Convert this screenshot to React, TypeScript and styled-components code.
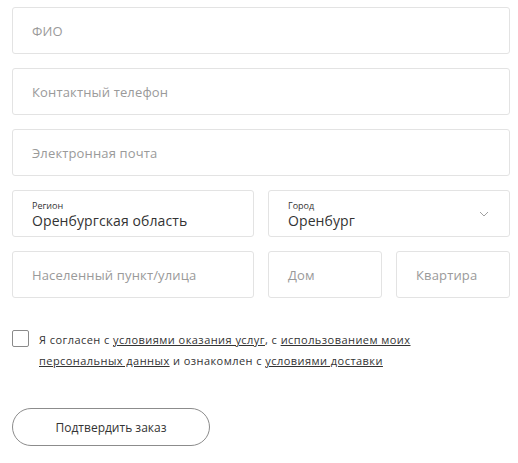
import styled, { createGlobalStyle } from 'styled-components';

const GlobalStyle = createGlobalStyle`
  body {
    margin: 0;
    background: #ffffff;
    font-family: 'Open Sans', 'Liberation Sans', sans-serif;
  }
`;

const Form = styled.form`
  width: 498px;
  padding: 7px 12px 0;
`;

const Fields = styled.div`
  display: grid;
  grid-template-columns: 242px 114px 114px;
  gap: 14px;
`;

const Field = styled.div<{ $span?: number }>`
  grid-column: span ${({ $span }) => $span ?? 3};
  position: relative;
  height: 47px;
  box-sizing: border-box;
  border: 1px solid #e3e3e3;
  border-radius: 3px;
  display: flex;
  flex-direction: column;
  justify-content: center;
  padding: 0 19px;
`;

const Placeholder = styled.span`
  font-size: 13px;
  color: #9a9a9a;
  letter-spacing: 0.15px;
`;

const Label = styled.span`
  font-size: 9px;
  color: #333;
  line-height: 11px;
  margin-top: 2px;
`;

const Value = styled.span`
  font-size: 14px;
  color: #333;
  line-height: 19px;
  letter-spacing: 0.1px;
`;

const Chevron = styled.svg`
  position: absolute;
  right: 20px;
  top: 20px;
`;

const Agreement = styled.label`
  display: flex;
  gap: 10px;
  margin-top: 31px;
  font-size: 11px;
  line-height: 21px;
  color: #333;
`;

const Box = styled.span`
  flex: none;
  width: 17px;
  height: 17px;
  box-sizing: border-box;
  border: 1px solid #8a8a8a;
  border-radius: 2px;
  margin-top: 1px;
`;

const Text = styled.span`
  width: 400px;
  letter-spacing: 0.45px;
`;

const Link = styled.a`
  color: #333;
  text-decoration: underline;
`;

const Submit = styled.button`
  margin-top: 37px;
  width: 198px;
  height: 38px;
  border: 1px solid #8c8c8c;
  border-radius: 19px;
  background: #fff;
  font-family: inherit;
  font-size: 12px;
  color: #333;
`;

export default function App() {
  return (
    <>
      <GlobalStyle />
      <Form>
        <Fields>
          <Field><Placeholder>ФИО</Placeholder></Field>
          <Field><Placeholder>Контактный телефон</Placeholder></Field>
          <Field><Placeholder>Электронная почта</Placeholder></Field>
          <Field $span={1}>
            <Label>Регион</Label>
            <Value>Оренбургская область</Value>
          </Field>
          <Field $span={2}>
            <Label>Город</Label>
            <Value>Оренбург</Value>
            <Chevron width="10" height="6" viewBox="0 0 10 6">
              <path d="M1 1l4 4 4-4" fill="none" stroke="#a0a0a0" strokeWidth="1" />
            </Chevron>
          </Field>
          <Field $span={1}><Placeholder>Населенный пункт/улица</Placeholder></Field>
          <Field $span={1}><Placeholder>Дом</Placeholder></Field>
          <Field $span={1}><Placeholder>Квартира</Placeholder></Field>
        </Fields>
        <Agreement>
          <Box />
          <Text>
            Я согласен с <Link>условиями оказания услуг</Link>, с <Link>использованием моих</Link>
            <br />
            <Link>персональных данных</Link> и ознакомлен с <Link>условиями доставки</Link>
          </Text>
        </Agreement>
        <Submit type="button">Подтвердить заказ</Submit>
      </Form>
    </>
  );
}
